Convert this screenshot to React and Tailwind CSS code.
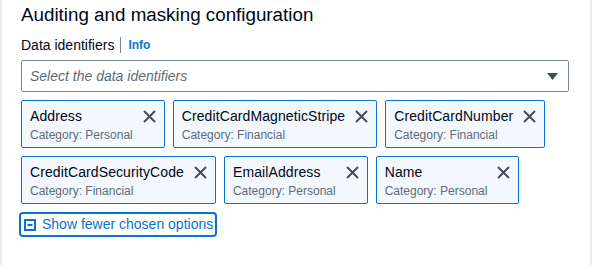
import React from 'react';

const tokens = [
  { name: 'Address', category: 'Personal' },
  { name: 'CreditCardMagneticStripe', category: 'Financial' },
  { name: 'CreditCardNumber', category: 'Financial' },
  { name: 'CreditCardSecurityCode', category: 'Financial' },
  { name: 'EmailAddress', category: 'Personal' },
  { name: 'Name', category: 'Personal' },
];

const CloseIcon = () => (
  <svg width="13" height="13" viewBox="0 0 13 13" fill="none">
    <path d="M1 1L12 12M12 1L1 12" stroke="#414d5c" strokeWidth="2" />
  </svg>
);

const Token = ({ name, category }) => (
  <div className="flex items-start border border-[#0972d3] bg-[#f2f8fd] rounded-[2px] py-1 pl-2 pr-2">
    <div className="flex flex-col">
      <span className="text-[14px] leading-[22px] tracking-[0.1px] text-[#000716]">{name}</span>
      <span className="text-[12px] leading-[16px] text-[#5f6b7a]">Category: {category}</span>
    </div>
    <button className="ml-[10px] h-[22px] flex items-center">
      <CloseIcon />
    </button>
  </div>
);

const App = () => {
  return (
    <div className="w-[594px] h-[265px] bg-white" style={{ fontFamily: '"Liberation Sans", Arial, sans-serif' }}>
      <div className="w-[592px] h-[265px] border-l-2 border-r-2 border-[#e9ebed] pl-[19px] pr-[21px] pt-1">
        <h2 className="text-[18.8px] leading-[22px] text-[#000716]">Auditing and masking configuration</h2>

        <div className="mt-2 flex items-center h-[22px]">
          <span className="text-[14px] leading-[22px] text-[#000716]">Data identifiers</span>
          <span className="ml-[6px] mr-[7px] w-px h-4 bg-[#7d8998]"></span>
          <span className="text-[12px] font-bold text-[#0972d3]">Info</span>
        </div>

        <div className="mt-1 h-8 border border-[#7d8998] rounded-[2px] flex items-center justify-between pl-2 pr-[10px]">
          <span className="text-[14px] italic text-[#5f6b7a]">Select the data identifiers</span>
          <svg width="11" height="7" viewBox="0 0 11 7">
            <path d="M0 0H11L5.5 7Z" fill="#414d5c" />
          </svg>
        </div>

        <div className="mt-2 flex flex-wrap gap-2">
          {tokens.map((t) => (
            <Token key={t.name} name={t.name} category={t.category} />
          ))}
        </div>

        <button className="mt-2 -ml-[2px] flex items-center gap-[6px] border-2 border-[#0972d3] rounded-[4px] h-[25px] pl-[3px] pr-[2px] text-[14px] text-[#0972d3]">
          <svg width="12" height="12" viewBox="0 0 12 12" fill="none">
            <rect x="1" y="1" width="10" height="10" stroke="#0972d3" strokeWidth="2" />
            <path d="M3.5 6H8.5" stroke="#0972d3" strokeWidth="2" />
          </svg>
          Show fewer chosen options
        </button>
      </div>
    </div>
  );
};

export default App;
